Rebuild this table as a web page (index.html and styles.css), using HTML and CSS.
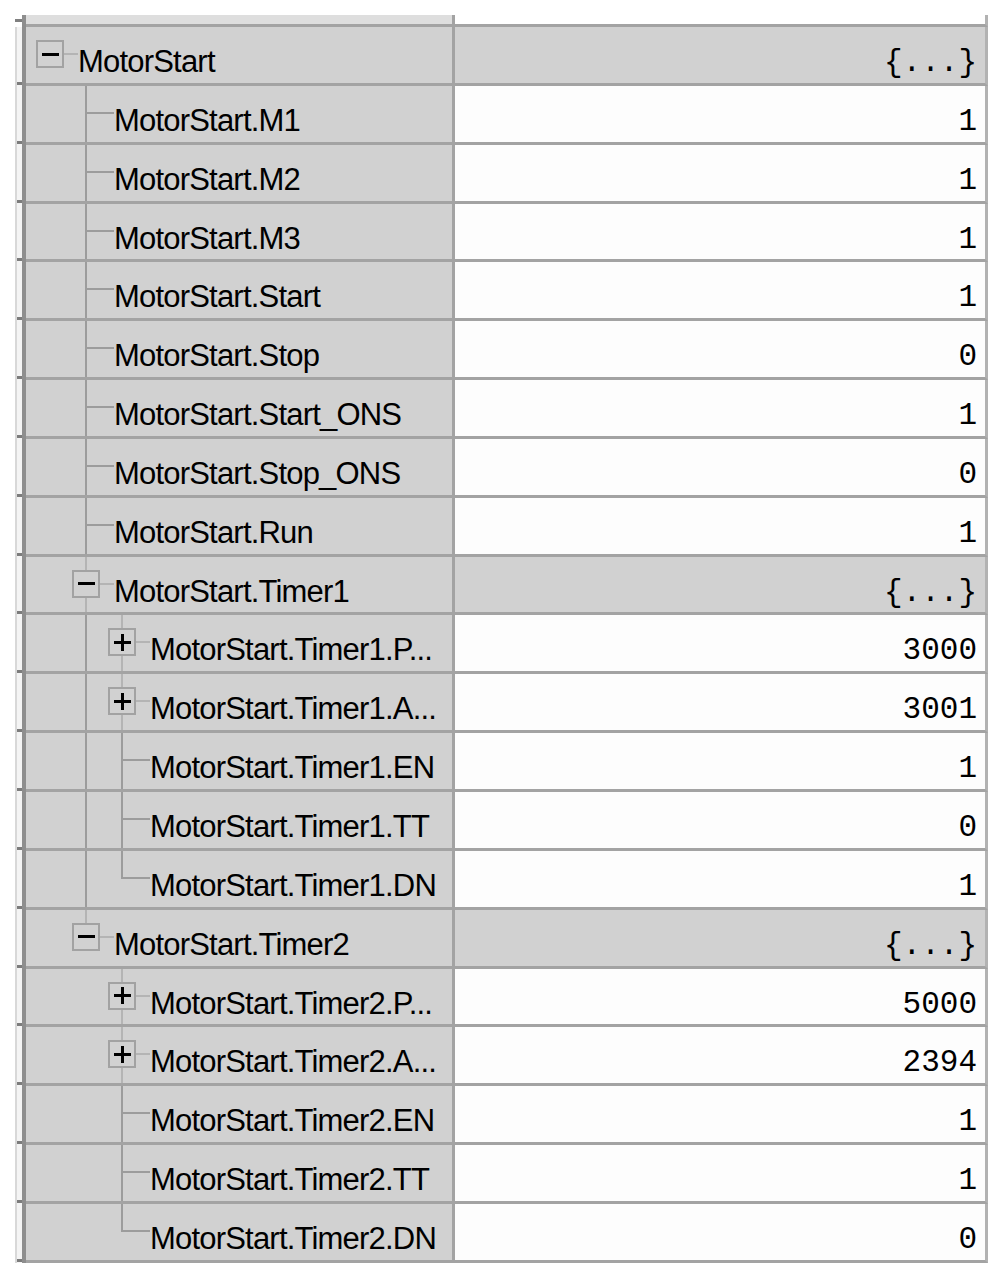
FILE: index.html
```html
<!DOCTYPE html>
<html>
<head>
<meta charset="utf-8">
<link rel="stylesheet" href="styles.css">
</head>
<body>
<div class="sheet">
  <div class="head"><span class="h-lead"></span><span class="h-name"></span><span class="h-val"></span></div>

  <div class="row struct"><div class="lead"></div><div class="name"><span class="e root box-row"><span class="bx minus"></span></span><span class="label">MotorStart</span></div><div class="val">{...}</div></div>

  <div class="row"><div class="lead"></div><div class="name"><span class="g"></span><span class="e mid"></span><span class="label">MotorStart.M1</span></div><div class="val">1</div></div>
  <div class="row"><div class="lead"></div><div class="name"><span class="g"></span><span class="e mid"></span><span class="label">MotorStart.M2</span></div><div class="val">1</div></div>
  <div class="row"><div class="lead"></div><div class="name"><span class="g"></span><span class="e mid"></span><span class="label">MotorStart.M3</span></div><div class="val">1</div></div>
  <div class="row"><div class="lead"></div><div class="name"><span class="g"></span><span class="e mid"></span><span class="label">MotorStart.Start</span></div><div class="val">1</div></div>
  <div class="row"><div class="lead"></div><div class="name"><span class="g"></span><span class="e mid"></span><span class="label">MotorStart.Stop</span></div><div class="val">0</div></div>
  <div class="row"><div class="lead"></div><div class="name"><span class="g"></span><span class="e mid"></span><span class="label">MotorStart.Start_ONS</span></div><div class="val">1</div></div>
  <div class="row"><div class="lead"></div><div class="name"><span class="g"></span><span class="e mid"></span><span class="label">MotorStart.Stop_ONS</span></div><div class="val">0</div></div>
  <div class="row"><div class="lead"></div><div class="name"><span class="g"></span><span class="e mid"></span><span class="label">MotorStart.Run</span></div><div class="val">1</div></div>

  <div class="row struct"><div class="lead"></div><div class="name"><span class="g"></span><span class="e mid box-row"><span class="bx minus"></span></span><span class="label">MotorStart.Timer1</span></div><div class="val">{...}</div></div>
  <div class="row"><div class="lead"></div><div class="name"><span class="g"></span><span class="g v"></span><span class="e mid box-row"><span class="bx plus"></span></span><span class="label">MotorStart.Timer1.P...</span></div><div class="val">3000</div></div>
  <div class="row"><div class="lead"></div><div class="name"><span class="g"></span><span class="g v"></span><span class="e mid box-row"><span class="bx plus"></span></span><span class="label">MotorStart.Timer1.A...</span></div><div class="val">3001</div></div>
  <div class="row"><div class="lead"></div><div class="name"><span class="g"></span><span class="g v"></span><span class="e mid"></span><span class="label">MotorStart.Timer1.EN</span></div><div class="val">1</div></div>
  <div class="row"><div class="lead"></div><div class="name"><span class="g"></span><span class="g v"></span><span class="e mid"></span><span class="label">MotorStart.Timer1.TT</span></div><div class="val">0</div></div>
  <div class="row"><div class="lead"></div><div class="name"><span class="g"></span><span class="g v"></span><span class="e end"></span><span class="label">MotorStart.Timer1.DN</span></div><div class="val">1</div></div>

  <div class="row struct"><div class="lead"></div><div class="name"><span class="g"></span><span class="e end box-row"><span class="bx minus"></span></span><span class="label">MotorStart.Timer2</span></div><div class="val">{...}</div></div>
  <div class="row"><div class="lead"></div><div class="name"><span class="g"></span><span class="g"></span><span class="e mid box-row"><span class="bx plus"></span></span><span class="label">MotorStart.Timer2.P...</span></div><div class="val">5000</div></div>
  <div class="row"><div class="lead"></div><div class="name"><span class="g"></span><span class="g"></span><span class="e mid box-row"><span class="bx plus"></span></span><span class="label">MotorStart.Timer2.A...</span></div><div class="val">2394</div></div>
  <div class="row"><div class="lead"></div><div class="name"><span class="g"></span><span class="g"></span><span class="e mid"></span><span class="label">MotorStart.Timer2.EN</span></div><div class="val">1</div></div>
  <div class="row"><div class="lead"></div><div class="name"><span class="g"></span><span class="g"></span><span class="e mid"></span><span class="label">MotorStart.Timer2.TT</span></div><div class="val">1</div></div>
  <div class="row"><div class="lead"></div><div class="name"><span class="g"></span><span class="g"></span><span class="e end"></span><span class="label">MotorStart.Timer2.DN</span></div><div class="val">0</div></div>
</div>
</body>
</html>
```

FILE: styles.css
```css
* { box-sizing: border-box; }

body {
  margin: 0;
  background: #ffffff;
}

.sheet {
  --ln: #9c9c9c;
  --grid: #a3a3a3;
  --cell: #d1d1d1;
  padding-left: 15px;
}

.head {
  display: flex;
  height: 27px;
  align-items: flex-end;
}

.h-lead {
  width: 11px;
  height: 12px;
  border-right: 4px solid #8e8e8e;
  background: linear-gradient(#808080, #808080) 0 4px / 100% 3px no-repeat;
}

.h-name {
  width: 429px;
  height: 12px;
  background: #dedede;
  border-right: 3px solid var(--grid);
  border-bottom: 3px solid var(--grid);
}

.h-val {
  width: 533px;
  height: 12px;
  border-right: 3px solid #b2b2b2;
  border-bottom: 3px solid var(--grid);
}

.row {
  display: flex;
  height: 58.857px;
}

.lead {
  width: 11px;
  border-left: 2px solid #d8d8d8;
  border-right: 4px solid #8e8e8e;
  background: #f4f4f4 linear-gradient(#7c7c7c, #7c7c7c) 0 calc(100% - 1px) / 100% 3px no-repeat;
}

.name {
  width: 429px;
  display: flex;
  padding-left: 6px;
  background: var(--cell);
  border-right: 3px solid var(--grid);
  border-bottom: 3px solid var(--grid);
  overflow: hidden;
}

.val {
  width: 533px;
  padding: 20px 8px 0 0;
  background: #fdfdfd;
  border-right: 3px solid #b2b2b2;
  border-bottom: 3px solid var(--grid);
  text-align: right;
  font-family: "Liberation Mono", "DejaVu Sans Mono", monospace;
  font-size: 31px;
  line-height: 31px;
  color: #000;
  white-space: pre;
}

.struct .val {
  background: var(--cell);
}

.label {
  padding-top: 19px;
  font-family: "Liberation Sans", Arial, sans-serif;
  font-size: 31px;
  line-height: 31px;
  letter-spacing: -0.8px;
  color: #000;
  white-space: nowrap;
}

/* tree guides */
.g {
  flex: none;
  width: 36px;
}

.g.v {
  background: linear-gradient(var(--ln), var(--ln)) 17px 0 / 2px 100% no-repeat;
}

.e {
  flex: none;
  width: 46px;
  display: flex;
  align-items: flex-start;
  background: linear-gradient(var(--ln), var(--ln)) 18px 26px / 28px 2px no-repeat;
}

.e.mid {
  background:
    linear-gradient(var(--ln), var(--ln)) 18px 26px / 28px 2px no-repeat,
    linear-gradient(var(--ln), var(--ln)) 17px 0 / 2px 100% no-repeat;
}

.e.end {
  background:
    linear-gradient(var(--ln), var(--ln)) 18px 26px / 28px 2px no-repeat,
    linear-gradient(var(--ln), var(--ln)) 17px 0 / 2px 28px no-repeat;
}

.e.box-row {
  --ln: #b4b4b4;
}

.bx {
  flex: none;
  width: 28px;
  height: 28px;
  margin: 13px 0 0 4px;
  border: 2px solid #a2a2a2;
  background: var(--cell);
  display: grid;
  place-items: center;
}

.bx::before,
.bx::after {
  content: "";
  grid-area: 1 / 1;
  background: #000;
}

.bx::before {
  width: 17px;
  height: 3px;
}

.bx.plus::after {
  width: 3px;
  height: 17px;
}
```
